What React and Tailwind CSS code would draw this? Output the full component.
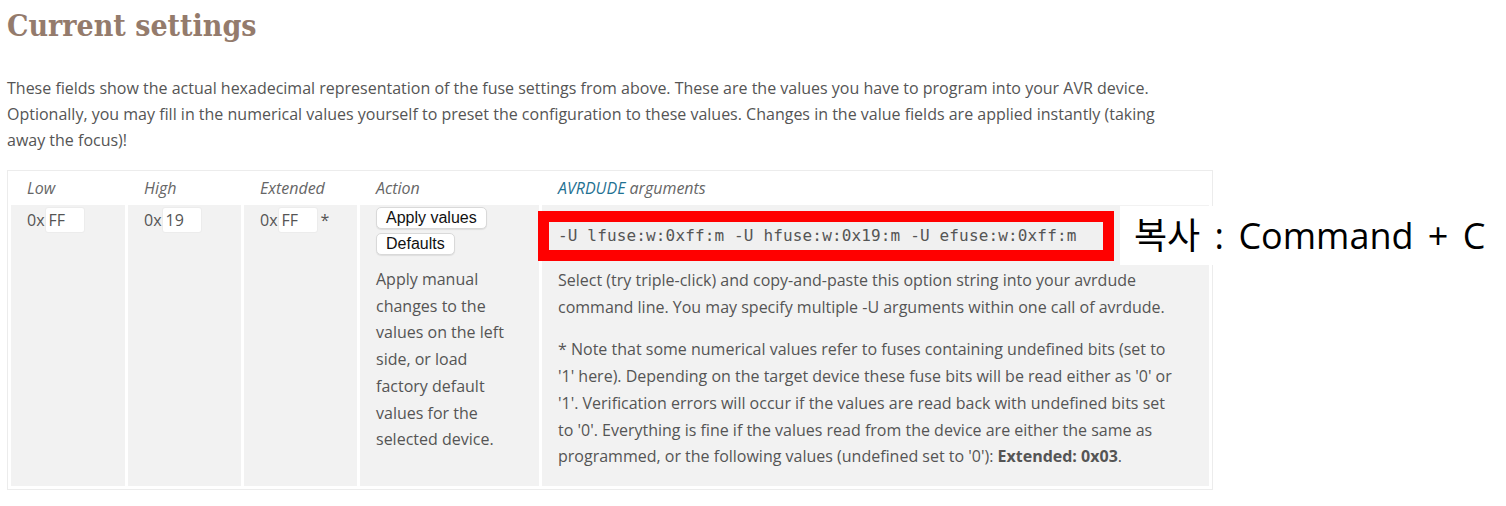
import React from "react";

const sans = { fontFamily: '"Open Sans", "Noto Sans", sans-serif' };

function HexInput({ value }) {
  return (
    <input
      defaultValue={value}
      className="w-[40px] h-[26px] bg-white border border-[#ececec] rounded-[3px] px-[3px] text-[16px] text-[#555] outline-none align-top"
      style={sans}
    />
  );
}

function Btn({ children }) {
  return (
    <button
      className="block h-[22px] px-[9px] bg-white border border-[#d9d9d9] rounded-[5px] text-[16px] leading-[20px] text-[#111] shadow-[0_1px_1px_rgba(0,0,0,0.08)]"
      style={{ fontFamily: '"Liberation Sans", Arial, sans-serif' }}
    >
      {children}
    </button>
  );
}

export default function App() {
  return (
    <div className="w-[1506px] h-[506px] bg-white relative overflow-hidden text-[#555]" style={sans}>
      <h2
        className="ml-[7px] pt-[6px] text-[30px] leading-[40px] font-bold text-[#947b6c]"
        style={{ fontFamily: '"DejaVu Serif Condensed", "DejaVu Serif", serif', fontStretch: "condensed" }}
      >
        Current settings
      </h2>
      <p className="ml-[7px] mt-[29px] w-[1180px] text-[16px] leading-[26px] text-[#555]">
        These fields show the actual hexadecimal representation of the fuse settings from above. These are the values you have to program into your AVR device. Optionally, you may fill in the numerical values yourself to preset the configuration to these values. Changes in the value fields are applied instantly (taking away the focus)!
      </p>
      <table
        className="ml-[7px] mt-[17px] w-[1206px] border border-[#ececec] border-separate border-spacing-[3px] text-[16px]"
        style={{ tableLayout: "fixed" }}
      >
        <colgroup>
          <col style={{ width: 114 }} />
          <col style={{ width: 113 }} />
          <col style={{ width: 113 }} />
          <col style={{ width: 179 }} />
          <col />
        </colgroup>
        <thead>
          <tr className="h-[28px] text-left italic text-[#666]">
            <th className="font-normal pl-[16px] leading-[26px]">Low</th>
            <th className="font-normal pl-[16px] leading-[26px]">High</th>
            <th className="font-normal pl-[16px] leading-[26px]">Extended</th>
            <th className="font-normal pl-[16px] leading-[26px]">Action</th>
            <th className="font-normal pl-[16px] leading-[26px]">
              <span className="text-[#1f7192]">AVRDUDE</span> arguments
            </th>
          </tr>
        </thead>
        <tbody>
          <tr className="align-top">
            <td className="bg-[#f2f2f2] pl-[16px] pt-[2px] h-[281px]">
              <div className="flex items-start leading-[26px]">
                <span>0x</span>
                <HexInput value="FF" />
              </div>
            </td>
            <td className="bg-[#f2f2f2] pl-[16px] pt-[2px]">
              <div className="flex items-start leading-[26px]">
                <span>0x</span>
                <HexInput value="19" />
              </div>
            </td>
            <td className="bg-[#f2f2f2] pl-[16px] pt-[2px]">
              <div className="flex items-start leading-[26px]">
                <span>0x</span>
                <HexInput value="FF" />
                <span className="ml-[3px]">*</span>
              </div>
            </td>
            <td className="bg-[#f2f2f2] pl-[16px] pr-[25px] pt-[2px]">
              <div className="flex flex-col gap-[4px] items-start">
                <Btn>Apply values</Btn>
                <Btn>Defaults</Btn>
              </div>
              <p className="mt-[11px] leading-[26.7px]">
                Apply manual changes to the values on the left side, or load factory default values for the selected device.
              </p>
            </td>
            <td className="bg-[#f2f2f2] pl-[7px] pr-[26px] pt-[17px]">
              <div className="relative w-[554px] h-[28px] bg-[#f0f0f0]">
                <div className="absolute -inset-[11px] border-[11px] border-[#ff0000]" />
                <div
                  className="pl-[9px] text-[16px] leading-[28px] text-[#555] whitespace-nowrap"
                  style={{ fontFamily: '"DejaVu Sans Mono", "Liberation Mono", monospace', letterSpacing: "0.15px" }}
                >
                  -U lfuse:w:0xff:m -U hfuse:w:0x19:m -U efuse:w:0xff:m
                </div>
              </div>
              <div className="pl-[9px]">
                <p className="mt-[17px] leading-[26.7px]">
                  Select (try triple-click) and copy-and-paste this option string into your avrdude command line. You may specify multiple -U arguments within one call of avrdude.
                </p>
                <p className="mt-[16px] leading-[26.7px]">
                  * Note that some numerical values refer to fuses containing undefined bits (set to '1' here). Depending on the target device these fuse bits will be read either as '0' or '1'. Verification errors will occur if the values are read back with undefined bits set to '0'. Everything is fine if the values read from the device are either the same as programmed, or the following values (undefined set to '0'): <b>Extended: 0x03</b>.
                </p>
              </div>
            </td>
          </tr>
        </tbody>
      </table>
      <div
        className="absolute left-[1120px] top-[206px] w-[386px] h-[59px] bg-white flex items-center pl-[14px] text-[36px] text-black whitespace-nowrap"
        style={{ fontFamily: '"Open Sans", "Noto Sans CJK KR", sans-serif', wordSpacing: "5px" }}
      >
        복사 : Command + C
      </div>
    </div>
  );
}
